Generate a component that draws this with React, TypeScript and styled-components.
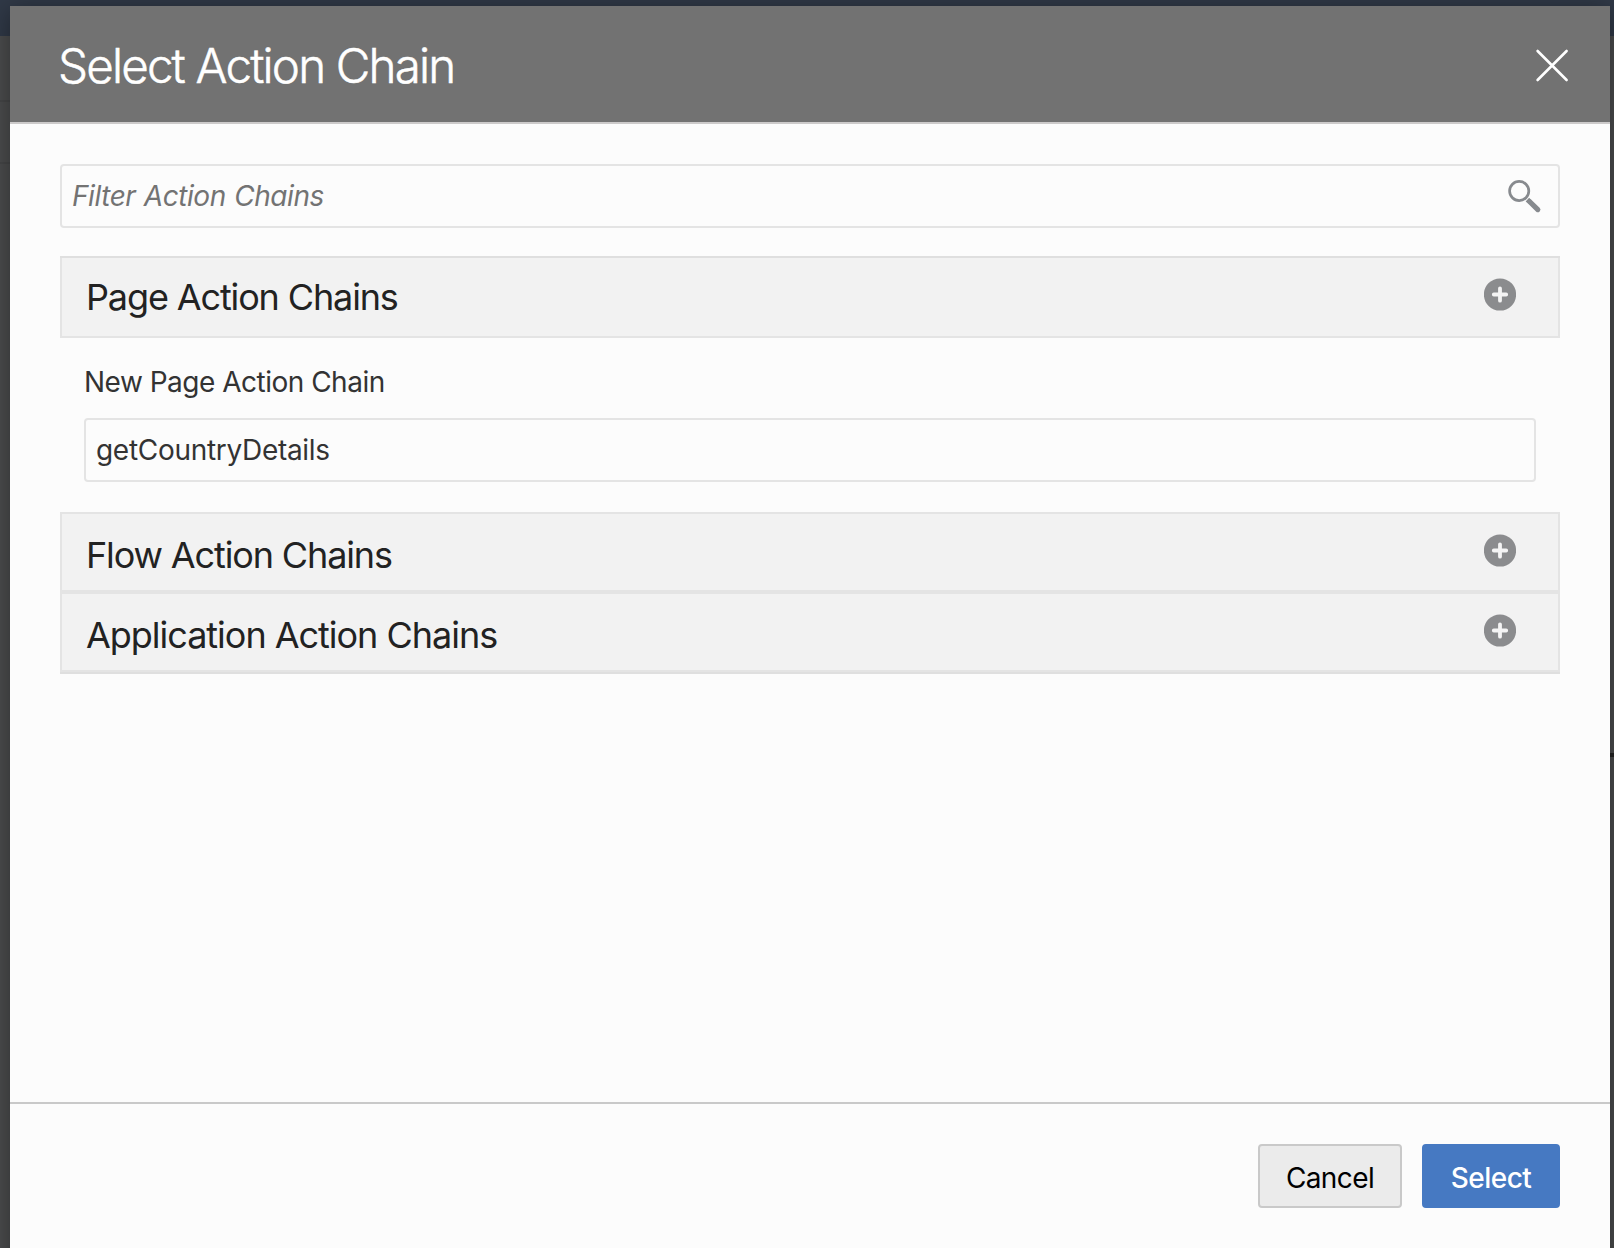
import React from "react";
import styled, { createGlobalStyle } from "styled-components";

const GlobalStyle = createGlobalStyle`
  * { box-sizing: border-box; }
  html, body { margin: 0; height: 100%; overflow: hidden; }
  body, input, button { font-family: Inter, "Liberation Sans", sans-serif; }
`;

const Backdrop = styled.div`
  display: flex;
  height: 1248px;
  padding: 6px 4px 0 10px;
  overflow: hidden;
  background:
    linear-gradient(#232323, #232323) 1610px 753px / 4px 4px no-repeat,
    linear-gradient(#454647, #454647) 0 100px / 10px 2px no-repeat,
    linear-gradient(#454647, #454647) 0 162px / 10px 2px no-repeat,
    linear-gradient(#303947, #303947) 0 0 / 100% 36px no-repeat,
    #4b4c4d;
`;

const Dialog = styled.section`
  flex: 1;
  display: flex;
  flex-direction: column;
  height: 1264px;
  background: #fcfcfc;
  box-shadow: 0 4px 24px rgba(0, 0, 0, 0.4);
`;

const Header = styled.header`
  display: flex;
  align-items: center;
  justify-content: space-between;
  height: 118px;
  padding: 0 40px 0 48px;
  background: #727272;
  border-bottom: 2px solid #cccaca;
`;

const Title = styled.h1`
  margin: 0;
  padding-top: 3px;
  color: #fff;
  font-size: 47.5px;
  font-weight: 350;
  line-height: 58px;
  letter-spacing: -1.82px;
  -webkit-text-stroke: 0.5px #fff;
  white-space: nowrap;
`;

const IconButton = styled.button`
  display: flex;
  padding: 0;
  border: 0;
  background: none;
`;

const Body = styled.main`
  flex: 1;
  display: flex;
  flex-direction: column;
  padding: 40px 50px 0;
`;

const Field = styled.div`
  display: flex;
  align-items: center;
  height: 64px;
  padding: 0 16px 0 10px;
  border: 2px solid #e4e4e4;
  border-radius: 4px;
  background: #fcfcfc;
`;

const TextInput = styled.input`
  flex: 1;
  min-width: 0;
  height: 58px;
  padding: 0;
  border: 0;
  outline: 0;
  background: transparent;
  color: #333;
  font-size: 28px;
  letter-spacing: -0.3px;
  &::placeholder {
    color: #737373;
    font-style: italic;
    letter-spacing: -0.45px;
    word-spacing: 1px;
    opacity: 1;
  }
`;

const Accordion = styled.div`
  display: flex;
  flex-direction: column;
  margin-top: 28px;
  border-top: 2px solid #dfdfdf;
  border-bottom: 2px solid #dfdfdf;
`;

const SectionHeader = styled.div<{ $first?: boolean }>`
  display: flex;
  align-items: flex-start;
  justify-content: space-between;
  height: 80px;
  padding: ${(p) => (p.$first ? "17px 42px 0 24px" : "19px 42px 0 24px")};
  border: 2px solid #e4e4e4;
  border-top-width: ${(p) => (p.$first ? 0 : 2)}px;
  background: #f2f2f2;
`;

const SectionTitle = styled.h2<{ $spacing: number }>`
  margin: 0;
  color: #222;
  font-size: 36px;
  font-weight: 400;
  line-height: 44px;
  letter-spacing: ${(p) => p.$spacing}px;
  white-space: nowrap;
`;

const AddButton = styled(IconButton)<{ $top: number }>`
  margin-top: ${(p) => p.$top}px;
`;

const Panel = styled.div`
  display: flex;
  flex-direction: column;
  height: 174px;
  padding: 27px 24px 0;
`;

const Label = styled.label`
  margin-bottom: 19px;
  color: #333;
  font-size: 28px;
  line-height: 34px;
  letter-spacing: -0.5px;
`;

const Footer = styled.footer`
  display: flex;
  justify-content: flex-end;
  gap: 20px;
  height: 168px;
  padding: 40px 50px 0;
  border-top: 2px solid #c9c9c9;
`;

const Button = styled.button<{ $primary?: boolean }>`
  width: ${(p) => (p.$primary ? 138 : 144)}px;
  height: 64px;
  padding: 4px 0 0;
  border: 2px solid ${(p) => (p.$primary ? "#4679c2" : "#c9c9c9")};
  border-radius: 4px;
  background: ${(p) => (p.$primary ? "#4679c2" : "#ebebeb")};
  color: ${(p) => (p.$primary ? "#fff" : "#000")};
  font-size: 28px;
  font-weight: ${(p) => (p.$primary ? 500 : 400)};
  letter-spacing: ${(p) => (p.$primary ? -0.5 : -0.6)}px;
`;

const CloseIcon = () => (
  <svg width="36" height="36" viewBox="0 0 36 36" fill="none" stroke="#fff" strokeWidth="2.6" strokeLinecap="round">
    <path d="M3.6 5 32.6 34M32.6 5 3.6 34" />
  </svg>
);

const SearchIcon = () => (
  <svg width="36" height="36" viewBox="0 0 36 36" fill="none" stroke="#878a8e">
    <circle cx="13.2" cy="13" r="9.6" strokeWidth="2.7" />
    <path d="M21.4 21.6 24 24" strokeWidth="5" />
    <path d="M24 24 31.8 31.6" strokeWidth="5.2" strokeLinecap="round" />
  </svg>
);

const PlusIcon = () => (
  <svg width="32" height="33" viewBox="0 0 32 33" fill="none">
    <circle cx="16" cy="16.5" r="16.1" fill="#8b8c8e" />
    <path d="M16 10.3V22.7M9.8 16.5H22.2" stroke="#f4f4f4" strokeWidth="3.8" strokeLinecap="round" />
  </svg>
);

interface SectionProps {
  title: string;
  spacing: number;
  first?: boolean;
}

const Section = ({ title, spacing, first }: SectionProps) => (
  <SectionHeader $first={first}>
    <SectionTitle $spacing={spacing}>{title}</SectionTitle>
    <AddButton $top={first ? 3 : 1} aria-label={`Add to ${title}`}>
      <PlusIcon />
    </AddButton>
  </SectionHeader>
);

export default function App() {
  return (
    <>
      <GlobalStyle />
      <Backdrop>
        <Dialog role="dialog">
          <Header>
            <Title>Select Action Chain</Title>
            <IconButton aria-label="Close">
              <CloseIcon />
            </IconButton>
          </Header>
          <Body>
            <Field>
              <TextInput placeholder="Filter Action Chains" />
              <SearchIcon />
            </Field>
            <Accordion>
              <Section first title="Page Action Chains" spacing={-1.13} />
              <Panel>
                <Label htmlFor="chain">New Page Action Chain</Label>
                <Field>
                  <TextInput id="chain" defaultValue="getCountryDetails" />
                </Field>
              </Panel>
              <Section title="Flow Action Chains" spacing={-1.13} />
              <Section title="Application Action Chains" spacing={-1.02} />
            </Accordion>
          </Body>
          <Footer>
            <Button>Cancel</Button>
            <Button $primary>Select</Button>
          </Footer>
        </Dialog>
      </Backdrop>
    </>
  );
}
